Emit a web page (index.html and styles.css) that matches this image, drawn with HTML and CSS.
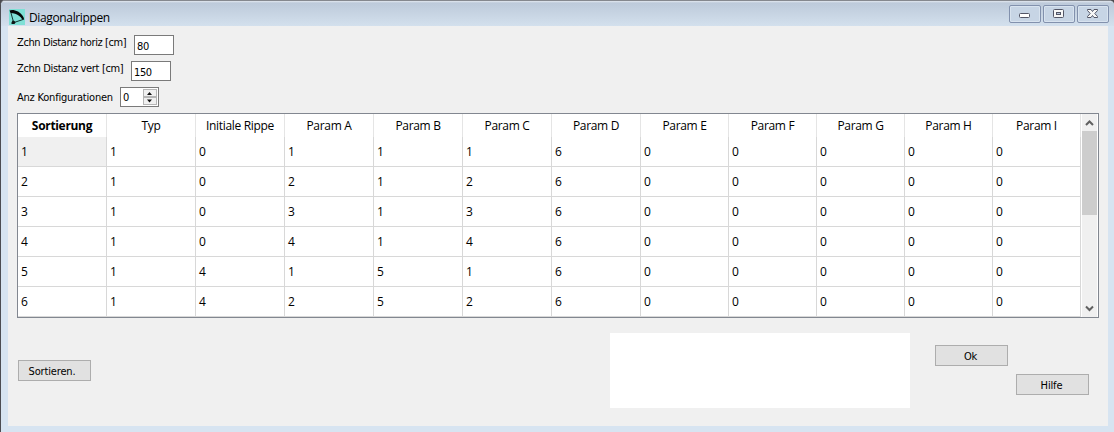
FILE: index.html
```html
<!DOCTYPE html>
<html lang="de">
<head>
<meta charset="utf-8">
<title>Diagonalrippen</title>
<link rel="stylesheet" href="styles.css">
</head>
<body>
<div class="window">
  <header class="titlebar">
    <svg class="app-icon" width="16" height="16" viewBox="0 0 16 16"><rect width="16" height="16" fill="#7fe0d6"/><path d="M.5 1.500C2 .5 6 .8 9 2.500 12.500 4.500 14.800 7.500 15.200 10.500L13.500 11C12 7.500 8.500 4.500 1.500 4Z" fill="#050808"/><path d="M2 4L4.500 13M14 10.500L5 13.500" stroke="#123432" stroke-width="1" fill="none"/><path d="M3.500 11.500L5.500 12 6.500 13.500 5.500 15H2.500V13.500Z" fill="#101616"/></svg>
    <span class="title">Diagonalrippen</span>
    <div class="controls">
      <span class="control"><svg width="30" height="16" viewBox="0 0 30 16"><rect x="9.500" y="7.500" width="10" height="4" rx="1" fill="#fff" stroke="#535666"/></svg></span>
      <span class="control"><svg width="30" height="16" viewBox="0 0 30 16"><rect x="9.500" y="3.500" width="10" height="8" rx="1" fill="#f7f7f7" stroke="#535666"/><rect x="12.500" y="6.500" width="4" height="2" fill="#b8c6dc" stroke="#535666"/></svg></span>
      <span class="control"><svg width="30" height="16" viewBox="0 0 30 16"><path d="M9.500 3.500H13L14.500 5.500 16 3.500H19.500V4.500L16.800 7.500 19.500 10.500V11.500H16L14.500 9.500 13 11.500H9.500V10.500L12.200 7.500 9.500 4.500Z" fill="#f7f7f7" stroke="#535666"/></svg></span>
    </div>
  </header>
  <main class="content">
    <form class="settings">
      <div class="field"><label class="label-h">Zchn Distanz horiz [cm]</label><span class="input">80</span></div>
      <div class="field"><label class="label-v">Zchn Distanz vert [cm]</label><span class="input">150</span></div>
      <div class="field field-count"><label class="label-n">Anz Konfigurationen</label><span class="spinner"><span>0</span><svg width="15" height="17" viewBox="0 0 15 17"><rect x=".5" y=".5" width="13" height="7" fill="#f0f0f0" stroke="#b5b5b5"/><rect x=".5" y="8.500" width="13" height="7" fill="#f0f0f0" stroke="#b5b5b5"/><path d="M4 6L6.500 3 9 6ZM4 10.500H9L6.500 13.500Z" fill="#111"/></svg></span></div>
    </form>
    <section class="grid-frame">
      <div class="grid">
        <div class="row head"><b>Sortierung</b><span>Typ</span><span>Initiale Rippe</span><span>Param A</span><span>Param B</span><span>Param C</span><span>Param D</span><span>Param E</span><span>Param F</span><span>Param G</span><span>Param H</span><span>Param I</span></div>
        <div class="row"><span class="selected">1</span><span>1</span><span>0</span><span>1</span><span>1</span><span>1</span><span>6</span><span>0</span><span>0</span><span>0</span><span>0</span><span>0</span></div>
        <div class="row"><span>2</span><span>1</span><span>0</span><span>2</span><span>1</span><span>2</span><span>6</span><span>0</span><span>0</span><span>0</span><span>0</span><span>0</span></div>
        <div class="row"><span>3</span><span>1</span><span>0</span><span>3</span><span>1</span><span>3</span><span>6</span><span>0</span><span>0</span><span>0</span><span>0</span><span>0</span></div>
        <div class="row"><span>4</span><span>1</span><span>0</span><span>4</span><span>1</span><span>4</span><span>6</span><span>0</span><span>0</span><span>0</span><span>0</span><span>0</span></div>
        <div class="row"><span>5</span><span>1</span><span>4</span><span>1</span><span>5</span><span>1</span><span>6</span><span>0</span><span>0</span><span>0</span><span>0</span><span>0</span></div>
        <div class="row"><span>6</span><span>1</span><span>4</span><span>2</span><span>5</span><span>2</span><span>6</span><span>0</span><span>0</span><span>0</span><span>0</span><span>0</span></div>
      </div>
      <div class="scrollbar">
        <svg width="15" height="17" viewBox="0 0 15 17"><path d="M4 11L7.500 7.500 11 11" fill="none" stroke="#606060" stroke-width="2"/></svg>
        <div class="thumb"></div>
        <svg width="15" height="17" viewBox="0 0 15 17"><path d="M4 6.500L7.500 10 11 6.500" fill="none" stroke="#606060" stroke-width="2"/></svg>
      </div>
    </section>
    <footer class="footer">
      <button class="button sort" type="button">Sortieren.</button>
      <div class="message"></div>
      <button class="button ok" type="button">Ok</button>
      <button class="button help" type="button">Hilfe</button>
    </footer>
  </main>
</div>
</body>
</html>
```
FILE: styles.css
```css
* { box-sizing: border-box; }
body { margin: 0; background: #4b4b50; overflow: hidden; }
.window {
  width: 1114px; height: 432px;
  border-left: 1px solid #4c4d52; border-top: 1px solid #85888e;
  border-radius: 5px 5px 0 0;
  background: #d7e4f1;
  padding: 0 6px 6px 7px;
  display: flex; flex-direction: column;
  color: #000;
}
.titlebar {
  height: 25px; flex: none; margin: 0 -6px 0 -7px; padding: 0 5px 0 8px;
  display: flex; align-items: flex-start;
  background: linear-gradient(#e2e8ef 0, #bdcada 2px, #d3e0ed 25px);
  border-radius: 4px 4px 0 0;
}
.app-icon { margin-top: 8px; }
.title { margin: 8px 0 0 4px; font: 12px/17px "Open Sans", sans-serif; letter-spacing: -.36px; }
.controls { margin: 4px 0 0 auto; display: flex; gap: 2px; }
.control { width: 32px; height: 18px; border: 1px solid #8291ad; border-radius: 2px; background: #c7d5e5; box-shadow: inset 0 0 0 1px #d8e3ef; }
.control svg { display: block; }
.content { flex: 1; background: #f0f0f0; display: flex; flex-direction: column; padding: 9px 9px 0; }
.settings { height: 78px; display: flex; flex-direction: column; font: 11px/14px "DejaVu Sans Condensed", "DejaVu Sans", sans-serif; font-stretch: condensed; }
.field { height: 26px; display: flex; align-items: flex-start; }
.field label { white-space: nowrap; }
.label-h { width: 117px; padding-top: 1px; letter-spacing: -.39px; }
.label-v { width: 114px; padding-top: 1px; letter-spacing: -.34px; }
.label-n { width: 103px; padding-top: 4px; letter-spacing: -.21px; }
.input { width: 40px; height: 20px; border: 1px solid #7a7a7a; background: #fff; padding: 4px 0 0 2px; letter-spacing: -.4px; }
.spinner { width: 39px; height: 20px; border: 1px solid #7a7a7a; background: #fff; padding: 3px 0 0 2px; display: flex; justify-content: space-between; }
.spinner svg { margin-top: -2px; }
.grid-frame { width: 1082px; height: 205px; flex: none; border: 1px solid #828790; background: #fff; display: flex; font: 12px/16px "Open Sans", sans-serif; }
.grid { width: 1063px; }
.row { display: grid; grid-template-columns: repeat(7, 89px) repeat(5, 88px); height: 30px; }
.row > * { border-right: 1px solid #d8d8d8; border-bottom: 1px solid #d8d8d8; padding: 7px 0 0 3px; }
.row.head { height: 23px; }
.row.head > * { border-bottom: 0; border-right-color: #e5e5e5; padding: 4px 0 0; text-align: center; letter-spacing: -.32px; }
.row .selected { background: #f0f0f0; }
.scrollbar { width: 15px; margin-left: 1px; background: #f0f0f0; display: flex; flex-direction: column; }
.scrollbar svg { display: block; }
.scrollbar svg:last-child { margin-top: auto; }
.thumb { height: 84px; background: #cdcdcd; }
.footer { display: flex; align-items: flex-start; padding: 15px 1px 0; }
.button { width: 73px; height: 21px; padding: 1px 2px 0 0; border: 1px solid #adadad; background: #e1e1e1; color: #000; font: 11px/17px "DejaVu Sans Condensed", "DejaVu Sans", sans-serif; font-stretch: condensed; letter-spacing: -.15px; }
.sort { margin-top: 27px; padding-right: 5px; }
.message { width: 300px; height: 75px; margin-left: 519px; background: #fff; }
.ok { margin: 12px 0 0 25px; }
.help { margin: 41px 0 0 8px; }
```
